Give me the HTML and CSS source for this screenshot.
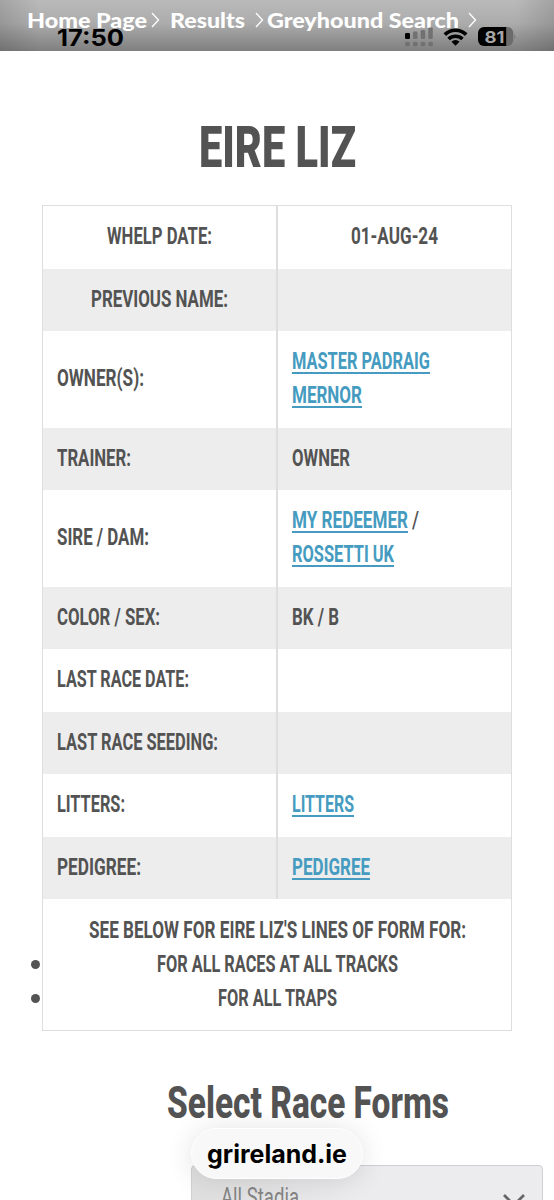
FILE: index.html
```html
<!DOCTYPE html>
<html lang="en">
<head>
<meta charset="utf-8">
<title>Eire Liz</title>
<link rel="stylesheet" href="styles.css">
</head>
<body>
<header class="top">
  <nav class="crumbs">
    <span class="fit" data-w="120">Home Page</span>
    <svg class="chev" width="9" height="16" viewBox="0 0 9 16"><path d="M1 1l6.500 7L1 15"/></svg>
    <span class="fit results" data-w="75">Results</span>
    <svg class="chev after-results" width="9" height="16" viewBox="0 0 9 16"><path d="M1 1l6.500 7L1 15"/></svg>
    <span class="fit search" data-w="192">Greyhound Search</span>
    <svg class="chev after-search" width="9" height="16" viewBox="0 0 9 16"><path d="M1 1l6.500 7L1 15"/></svg>
  </nav>
  <div class="clock"><span class="fit" data-w="67">17:50</span></div>
  <svg class="status" width="112" height="24" viewBox="404 25 112 24">
    <rect x="405" y="33" width="5" height="6" rx="1.300"/>
    <g fill="#717171">
      <rect x="413" y="31.500" width="4.500" height="7.500" rx="1.300"/>
      <rect x="420.700" y="30" width="4.500" height="9" rx="1.300"/>
      <rect x="428.300" y="27.500" width="4.500" height="11.500" rx="1.300"/>
      <rect x="405.200" y="41.800" width="4.600" height="4.400" rx="1.500"/>
      <rect x="413" y="41.800" width="4.600" height="4.400" rx="1.500"/>
      <rect x="420.700" y="41.800" width="4.600" height="4.400" rx="1.500"/>
      <rect x="428.300" y="41.800" width="4.600" height="4.400" rx="1.500"/>
    </g>
    <g fill="none" stroke="#000" stroke-width="3.600">
      <path d="M444.800 34.600a15.300 15.300 0 0 1 21.400 0"/>
      <path d="M448.600 39a9.900 9.900 0 0 1 13.800 0"/>
    </g>
    <path d="M455.500 45.800l-4-4a5.500 5.500 0 0 1 8 0z"/>
    <path d="M484 27h22.500v19H484a6 6 0 0 1-6-6v-7a6 6 0 0 1 6-6z"/>
    <path d="M506.500 27h.8a6 6 0 0 1 6 6v7a6 6 0 0 1-6 6h-.8z" fill="#6b6b6b"/>
    <path d="M514.500 34q1.500 2.500 0 5z" fill="#666"/>
    <text class="battery" x="484.500" y="42.800" textLength="20" lengthAdjust="spacingAndGlyphs">81</text>
  </svg>
</header>
<main>
  <h1><span class="fit" data-w="157">EIRE LIZ</span></h1>
  <section class="table">
    <div class="row center"><div><span class="fit" data-w="105">WHELP DATE:</span></div><div><span class="fit" data-w="87">01-AUG-24</span></div></div>
    <div class="row center alt"><div><span class="fit" data-w="137">PREVIOUS NAME:</span></div><div></div></div>
    <div class="row tall"><div><span class="fit" data-w="87">OWNER(S):</span></div><div><a><span class="fit" data-w="138">MASTER PADRAIG</span><br><span class="fit" data-w="70">MERNOR</span></a></div></div>
    <div class="row alt"><div><span class="fit" data-w="74">TRAINER:</span></div><div><span class="fit" data-w="58">OWNER</span></div></div>
    <div class="row tall"><div><span class="fit" data-w="92">SIRE / DAM:</span></div><div><p><a class="fit" data-w="116">MY REDEEMER</a><span class="fit slash" data-w="7">/</span><br><a class="fit" data-w="102">ROSSETTI UK</a></p></div></div>
    <div class="row alt"><div><span class="fit" data-w="103">COLOR / SEX:</span></div><div><span class="fit" data-w="47">BK / B</span></div></div>
    <div class="row"><div><span class="fit" data-w="132">LAST RACE DATE:</span></div><div></div></div>
    <div class="row alt"><div><span class="fit" data-w="161">LAST RACE SEEDING:</span></div><div></div></div>
    <div class="row"><div><span class="fit" data-w="68">LITTERS:</span></div><div><a class="fit" data-w="62">LITTERS</a></div></div>
    <div class="row alt"><div><span class="fit" data-w="84">PEDIGREE:</span></div><div><a class="fit" data-w="78">PEDIGREE</a></div></div>
    <div class="forms">
      <p><span class="fit" data-w="377">SEE BELOW FOR EIRE LIZ'S LINES OF FORM FOR:</span></p>
      <ul>
        <li><span class="fit" data-w="241">FOR ALL RACES AT ALL TRACKS</span></li>
        <li><span class="fit" data-w="119">FOR ALL TRAPS</span></li>
      </ul>
    </div>
  </section>
  <h2><span class="fit" data-w="282">Select Race Forms</span></h2>
  <div class="select">
    <span class="fit" data-w="78">All Stadia</span>
    <svg width="24" height="16" viewBox="0 0 24 16"><path d="M2 2l10 10L22 2"/></svg>
  </div>
</main>
<div class="address"><span class="fit" data-w="140">grireland.ie</span></div>
<script src="fit.js"></script>
</body>
</html>
```
FILE: styles.css
```css
* { box-sizing: border-box; }
body {
  margin: 0;
  height: 1200px;
  overflow: hidden;
  position: relative;
  background: #fff;
  color: #535353;
  font-family: Roboto, "Liberation Sans", sans-serif;
}
p, ul, h1, h2 { margin: 0; padding: 0; }
.fit { display: inline-block; white-space: nowrap; text-align: left; transform-origin: 0 50%; }

.top {
  position: relative;
  height: 51px;
  background:
    linear-gradient(90deg, rgba(0,0,0,.12), transparent 7%, transparent 93%, rgba(0,0,0,.12)),
    linear-gradient(#bababa, #acacac 45%, #7f7f7f);
}
.crumbs {
  display: flex;
  align-items: center;
  height: 39px;
  padding-left: 27px;
  color: #fff;
  font: 900 21.500px/38px Lato, sans-serif;
}
.chev { flex: none; margin-left: 4px; fill: none; stroke: #fff; stroke-width: 1.3; }
.results { margin-left: 10px; }
.after-results { margin-left: 10px; }
.search { margin-left: 3px; }
.after-search { margin-left: 9px; }
.clock { position: absolute; left: 57px; top: 23.500px; color: #000; font: 700 23px/28px Inter, sans-serif; }
.status { position: absolute; left: 404px; top: 25px; }
.battery { font: 700 16.500px Inter, sans-serif; fill: #a6a6a6; }

h1 { padding-top: 62px; height: 154px; text-align: center; font-size: 57.500px; line-height: 70px; font-weight: 900; }
.table {
  width: 470px;
  margin-left: 42px;
  border: 1.500px solid #dedede;
  font-size: 24.500px;
  font-weight: 700;
  line-height: 34px;
}
.row { display: grid; grid-template-columns: 235px 1fr; height: 62.500px; }
.row.tall { height: 96.600px; }
.row > div { display: flex; align-items: center; padding: 0 0 2px 14px; }
.row > div:first-child { border-right: 2px solid #dedede; }
.row.center > div { justify-content: center; padding-left: 0; }
.alt { background: #ededed; }
a { color: #459bc0; text-decoration: none; }
a.fit, a .fit { text-decoration: underline; text-decoration-thickness: 1.800px; text-underline-offset: 2.500px; }
.slash { margin-left: 4px; font-weight: 500; }
.forms { height: 131px; padding-top: 13.500px; text-align: center; }
.forms ul { list-style: none; }
.forms li { position: relative; }
.forms li::before {
  content: "";
  position: absolute;
  left: -12px;
  top: 13.500px;
  width: 9px;
  height: 9px;
  border-radius: 50%;
  background: #535353;
}
h2 { margin-top: 44px; padding-left: 167px; height: 90px; font-size: 43.500px; line-height: 58px; font-weight: 800; }
.select {
  display: flex;
  justify-content: space-between;
  align-items: flex-start;
  width: 352px;
  height: 70px;
  margin-left: 191px;
  padding: 15px 16px 0 29px;
  border: 1px solid #cfcfd4;
  border-radius: 4px;
  background: linear-gradient(90deg, #dfdfe0, #ececee 45%);
  color: #858585;
  font-size: 25px;
  line-height: 34px;
}
.select svg { margin-top: 12px; fill: none; stroke: #666; stroke-width: 2.800; }
.address {
  position: absolute;
  left: 191px;
  top: 1128px;
  width: 172px;
  height: 51px;
  border-radius: 26px;
  background: #f8f8f8;
  border: 1px solid #fff;
  box-shadow: 0 2px 28px rgba(0,0,0,.12);
  color: #000;
  text-align: center;
  font: 700 25px/50px Inter, sans-serif;
}
```
FILE: fit.js
```js
document.querySelectorAll('.fit').forEach(function (el) {
  var target = Number(el.dataset.w);
  var natural = el.getBoundingClientRect().width;
  el.style.width = target + 'px';
  el.style.flex = 'none';
  el.style.transform = 'scaleX(' + target / natural + ')';
});
```
